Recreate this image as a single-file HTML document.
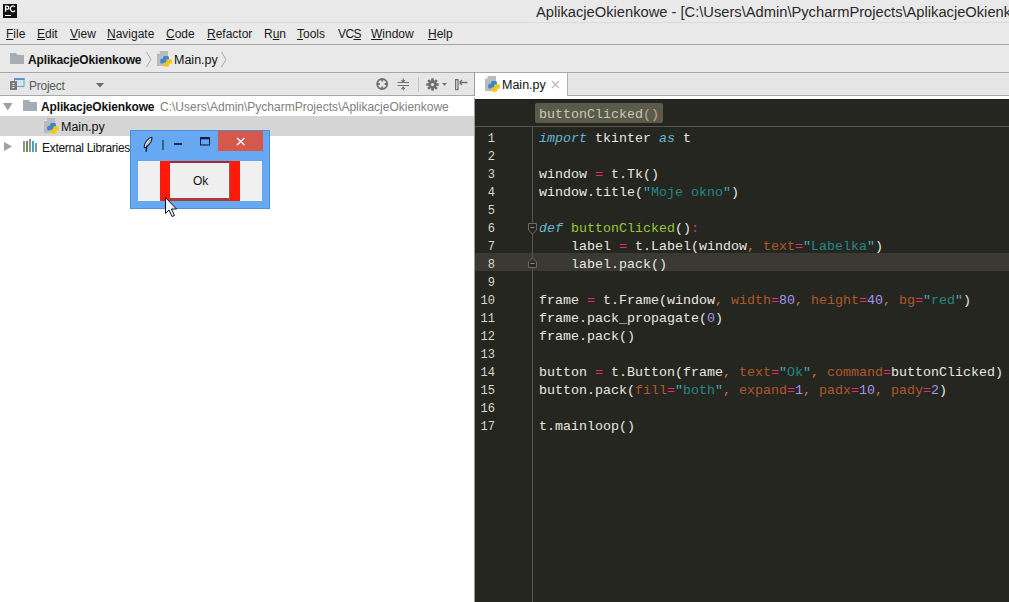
<!DOCTYPE html>
<html><head><meta charset="utf-8">
<style>
*{margin:0;padding:0;box-sizing:border-box}
html,body{width:1009px;height:602px;overflow:hidden;background:#fff;font-family:"Liberation Sans",sans-serif}
.a{position:absolute}
#title{left:0;top:0;width:1009px;height:23px;background:#e9e9e9;border-bottom:1px solid #dadada}
#menu{left:0;top:23px;width:1009px;height:22px;background:#e9e9e9;border-bottom:1px solid #a8a8a8}
#menu span{position:absolute;top:4px;font-size:12px;color:#1a1a1a;white-space:nowrap}
#menu u{text-decoration:underline;text-underline-offset:1px}
#nav{left:0;top:45px;width:1009px;height:28px;background:#e9e9e9;border-bottom:1px solid #a8a8a8}
#projhdr{left:0;top:73px;width:474px;height:23px;background:#e6e6e6;border-bottom:1px solid #a8a8a8}
#tree{left:0;top:96px;width:474px;height:506px;background:#fff}
#editor{left:474px;top:96px;width:535px;height:506px;background:#262621;border-left:1px solid #9a9a9a;border-top:3px solid #fff}
#tabbar{left:474px;top:73px;width:535px;height:23px;background:#e6e6e6;border-bottom:1px solid #a8a8a8}
.code{position:absolute;left:539px;font-family:"Liberation Mono",monospace;font-size:13.33px;white-space:pre;color:#e8e8e0;line-height:18px}
.ln{position:absolute;left:465px;width:30px;text-align:right;font-family:"Liberation Mono",monospace;font-size:12px;white-space:pre;color:#d8d8c8;line-height:18px}
.k{color:#62b8d4;font-style:italic}
.o{color:#e0306a}
.s{color:#23878a}
.q{color:#4aa6b6}
.f{color:#9fc43a}
.p{color:#ad582b}
.n{color:#a394ec}
.c{color:#c27a38}
</style></head><body>
<div id="title" class="a">
 <div class="a" style="left:3px;top:4px;width:14px;height:14px;background:#111"></div>
 <svg class="a" style="left:0;top:0" width="20" height="20"><path d="M5.6 11.8V6.1H7.3a1.55 1.55 0 0 1 0 3.1H5.6" stroke="#fff" stroke-width="1.3" fill="none"/><path d="M14.9 7A2.5 2.9 0 1 0 14.9 10.6" stroke="#fff" stroke-width="1.3" fill="none"/></svg>
 <div class="a" style="left:5px;top:15px;width:6px;height:1px;background:#fff"></div>
 <div class="a" style="left:536px;top:3.5px;font-size:14.7px;color:#2a2a2a;white-space:nowrap">AplikacjeOkienkowe - [C:\Users\Admin\PycharmProjects\AplikacjeOkienkowe] - ...\Main.py - PyCharm</div>
</div>
<div id="menu" class="a">
 <span style="left:6px"><u>F</u>ile</span>
 <span style="left:37px"><u>E</u>dit</span>
 <span style="left:70px"><u>V</u>iew</span>
 <span style="left:107px"><u>N</u>avigate</span>
 <span style="left:166px"><u>C</u>ode</span>
 <span style="left:207px"><u>R</u>efactor</span>
 <span style="left:264px">R<u>u</u>n</span>
 <span style="left:297px"><u>T</u>ools</span>
 <span style="left:338px;letter-spacing:-0.6px">VC<u>S</u></span>
 <span style="left:371px"><u>W</u>indow</span>
 <span style="left:428px"><u>H</u>elp</span>
</div>
<div id="nav" class="a"></div>
<svg class="a" style="left:10px;top:53px" width="14" height="11" viewBox="0 0 14 11"><path d="M0 0h6l1.2 2H14v9H0z" fill="#a6adb4"/></svg>
<div class="a" style="left:28px;top:53px;font-size:12px;font-weight:bold;color:#111;white-space:nowrap;letter-spacing:-0.15px">AplikacjeOkienkowe</div>
<svg class="a" style="left:145px;top:51px" width="8" height="17"><path d="M1.5 1l4.5 7.5-4.5 7.5" stroke="#a8a8a8" fill="none" stroke-width="1"/></svg>
<svg class="a" style="left:157px;top:51px" width="16" height="17" viewBox="0 0 16 17">
<path d="M3 0h8v15H0V3z" fill="#b8bcc0"/><path d="M0 3h3V0z" fill="#dfe2e4"/>
<rect x="6" y="5" width="6" height="4.5" rx="1.5" fill="#3b87cf"/><rect x="3.2" y="7.8" width="6" height="4.6" rx="1.5" fill="#3b87cf"/>
<rect x="9" y="8.2" width="6" height="4.6" rx="1.5" fill="#f7c51e"/><rect x="6.2" y="11.2" width="6" height="4.6" rx="1.5" fill="#f7c51e"/>
<rect x="6" y="8.6" width="3.2" height="2.6" fill="#3b87cf"/><rect x="9" y="11" width="3.2" height="2.4" fill="#f7c51e"/>
</svg>
<div class="a" style="left:174px;top:53px;font-size:12.5px;color:#111;white-space:nowrap">Main.py</div>
<svg class="a" style="left:220px;top:51px" width="8" height="17"><path d="M1.5 1l4.5 7.5-4.5 7.5" stroke="#a8a8a8" fill="none" stroke-width="1"/></svg>

<div id="projhdr" class="a"></div>
<svg class="a" style="left:10px;top:78px" width="15" height="12" viewBox="0 0 15 12">
 <rect x="4.5" y="0.5" width="9.5" height="8" fill="#d4e6f4" stroke="#6b9fcf"/>
 <rect x="4.5" y="0" width="10" height="2" fill="#5d95cc"/>
 <rect x="0" y="3" width="7" height="9" fill="#7c7c7c"/>
 <path d="M2.5 5.5h1.8M2.5 7.5h1.8M2.5 9.5h1.8" stroke="#eee" stroke-width="1"/>
</svg>
<div class="a" style="left:29px;top:79px;font-size:12px;letter-spacing:-0.25px;color:#5a5a5a;white-space:nowrap">Project</div>
<svg class="a" style="left:96px;top:83px" width="9" height="6"><path d="M0 0h8l-4 4.5z" fill="#6a6a6a"/></svg>
<svg class="a" style="left:375px;top:78px" width="14" height="13" viewBox="0 0 14 13">
 <circle cx="7.2" cy="6" r="5" fill="none" stroke="#707070" stroke-width="1.9"/>
 <path d="M7.2 1v2.6M7.2 8.4V11M2.2 6h2.6M9.6 6h2.6" stroke="#707070" stroke-width="1.8"/>
</svg>
<svg class="a" style="left:397px;top:77px" width="13" height="15" viewBox="0 0 13 15">
 <path d="M0.5 5.5h11.5M0.5 8.5h11.5" stroke="#707070" stroke-width="1.1"/>
 <path d="M6.2 1.5v3M4.4 3l1.8 2 1.8-2M6.2 13.5v-3.5M4.4 12l1.8-2 1.8 2" stroke="#707070" stroke-width="1.1" fill="none"/>
</svg>
<div class="a" style="left:418px;top:77px;width:1px;height:15px;background:#c4c4c4"></div>
<svg class="a" style="left:426px;top:78px" width="21" height="13" viewBox="0 0 21 13">
 <g transform="translate(6.5 6.5)" fill="#707070">
  <circle r="4.2"/>
  <rect x="-1.3" y="-6.2" width="2.6" height="12.4"/>
  <rect x="-6.2" y="-1.3" width="12.4" height="2.6"/>
  <rect x="-1.3" y="-6.2" width="2.6" height="12.4" transform="rotate(45)"/>
  <rect x="-1.3" y="-6.2" width="2.6" height="12.4" transform="rotate(-45)"/>
 </g>
 <circle cx="6.5" cy="6.5" r="1.6" fill="#e6e6e6"/>
 <path d="M16 5h5l-2.5 2.8z" fill="#707070"/>
</svg>
<svg class="a" style="left:454px;top:78px" width="15" height="13" viewBox="0 0 15 13">
 <rect x="1.6" y="1.6" width="2.4" height="10" fill="#e0e0e0" stroke="#707070" stroke-width="1.2"/>
 <path d="M5.5 4.5h8M5.5 4.5l2.5-2.5M5.5 4.5l2.5 2.5" stroke="#707070" stroke-width="1.3" fill="none"/>
</svg>

<div id="tree" class="a"></div>
<div class="a" style="left:0;top:116px;width:474px;height:20px;background:#d5d5d5"></div>
<svg class="a" style="left:3px;top:103px" width="10" height="8"><path d="M0 0h9.5l-4.75 7.5z" fill="#a0a0a0"/></svg>
<svg class="a" style="left:23px;top:100px" width="14" height="11" viewBox="0 0 14 11"><path d="M0 0h6l1.2 2H14v9H0z" fill="#a6adb4"/></svg>
<div class="a" style="left:41px;top:100px;font-size:12px;font-weight:bold;color:#111;white-space:nowrap;letter-spacing:-0.15px">AplikacjeOkienkowe</div>
<div class="a" style="left:160px;top:100px;font-size:12px;color:#808080;white-space:nowrap">C:\Users\Admin\PycharmProjects\AplikacjeOkienkowe</div>
<svg class="a" style="left:44px;top:118px" width="16" height="17" viewBox="0 0 16 17">
<path d="M3 0h8v15H0V3z" fill="#b8bcc0"/><path d="M0 3h3V0z" fill="#dfe2e4"/>
<rect x="6" y="5" width="6" height="4.5" rx="1.5" fill="#3b87cf"/><rect x="3.2" y="7.8" width="6" height="4.6" rx="1.5" fill="#3b87cf"/>
<rect x="9" y="8.2" width="6" height="4.6" rx="1.5" fill="#f7c51e"/><rect x="6.2" y="11.2" width="6" height="4.6" rx="1.5" fill="#f7c51e"/>
<rect x="6" y="8.6" width="3.2" height="2.6" fill="#3b87cf"/><rect x="9" y="11" width="3.2" height="2.4" fill="#f7c51e"/>
</svg>
<div class="a" style="left:61px;top:120px;font-size:12.5px;color:#111;white-space:nowrap">Main.py</div>
<svg class="a" style="left:4px;top:142px" width="8" height="10"><path d="M0 0v9l8 -4.5z" fill="#a0a0a0"/></svg>
<svg class="a" style="left:23px;top:139px" width="15" height="13" viewBox="0 0 15 13">
 <rect x="0" y="2" width="2" height="11" fill="#8e9296"/>
 <rect x="3" y="2" width="2" height="11" fill="#5a9a3c"/>
 <rect x="6" y="0" width="2" height="13" fill="#8e9296"/>
 <rect x="9" y="2" width="2" height="11" fill="#3ea2d8"/>
 <rect x="12" y="4" width="2" height="9" fill="#8e9296"/>
</svg>
<div class="a" style="left:42px;top:141px;font-size:12px;letter-spacing:-0.3px;color:#111;white-space:nowrap">External Libraries</div>

<div id="tabbar" class="a"></div>
<div class="a" style="left:475px;top:73px;width:93px;height:27px;background:#fff;border-right:1px solid #b0b0b0"></div><div class="a" style="left:474px;top:72px;width:1px;height:530px;background:#9c9c9c"></div>
<svg class="a" style="left:485px;top:76px" width="16" height="17" viewBox="0 0 16 17">
<path d="M3 0h8v15H0V3z" fill="#b8bcc0"/><path d="M0 3h3V0z" fill="#dfe2e4"/>
<rect x="6" y="5" width="6" height="4.5" rx="1.5" fill="#3b87cf"/><rect x="3.2" y="7.8" width="6" height="4.6" rx="1.5" fill="#3b87cf"/>
<rect x="9" y="8.2" width="6" height="4.6" rx="1.5" fill="#f7c51e"/><rect x="6.2" y="11.2" width="6" height="4.6" rx="1.5" fill="#f7c51e"/>
<rect x="6" y="8.6" width="3.2" height="2.6" fill="#3b87cf"/><rect x="9" y="11" width="3.2" height="2.4" fill="#f7c51e"/>
</svg>
<div class="a" style="left:502px;top:78px;font-size:12.5px;color:#111;white-space:nowrap">Main.py</div>
<svg class="a" style="left:551px;top:80px" width="9" height="9"><path d="M1 1l7 7M8 1L1 8" stroke="#bababa" stroke-width="1.3"/></svg>
<div id="editor" class="a"></div>
<div class="a" style="left:475px;top:99px;width:534px;height:1px;background:#1c1c19"></div>
<div class="a" style="left:475px;top:253px;width:534px;height:18px;background:#3b3a32"></div>
<div class="a" style="left:475px;top:126px;width:534px;height:1px;background:#56564f"></div>
<div class="a" style="left:532px;top:127px;width:1px;height:475px;background:#55554f"></div>
<div class="a" style="left:535px;top:103px;width:128px;height:20px;background:#5a5b4a;border-radius:2px"></div>
<div class="a" style="left:539px;top:106px;font-family:'Liberation Mono',monospace;font-size:13.33px;line-height:18px;color:#c8c8b8;white-space:pre">buttonClicked<span style="color:#c8a888">()</span></div>
<svg class="a" style="left:527px;top:222px" width="11" height="13" viewBox="0 0 11 13"><path d="M1.5 1.5h8v6.5l-4 4-4-4z" fill="#262621" stroke="#6a6a62"/><path d="M3.5 5.5h4" stroke="#8a8a82"/></svg>
<svg class="a" style="left:527px;top:257px" width="11" height="12" viewBox="0 0 11 12"><path d="M1.5 10.5h8v-5.5l-4-4-4 4z" fill="#2a2a25" stroke="#6a6a62"/><path d="M3.5 6.5h4" stroke="#8a8a82"/></svg>
<div class="ln" style="top:130px">1
2
3
4
5
6
7
8
9
10
11
12
13
14
15
16
17</div>
<div class="code" style="top:129.5px"><span class="k">import</span> tkinter <span class="k">as</span> t

window <span class="o">=</span> t.Tk()
window.title(<span class="q">"</span><span class="s">Moje okno</span><span class="q">"</span>)

<span class="k">def</span> <span class="f">buttonClicked</span>()<span class="o">:</span>
    label <span class="o">=</span> t.Label(window<span class="c">,</span><span class="p"> text</span><span class="o">=</span><span class="q">"</span><span class="s">Labelka</span><span class="q">"</span>)
    label.pack()

frame <span class="o">=</span> t.Frame(window<span class="c">,</span><span class="p"> width</span><span class="o">=</span><span class="n">80</span><span class="c">,</span><span class="p"> height</span><span class="o">=</span><span class="n">40</span><span class="c">,</span><span class="p"> bg</span><span class="o">=</span><span class="q">"</span><span class="s">red</span><span class="q">"</span>)
frame.pack_propagate(<span class="n">0</span>)
frame.pack()

button <span class="o">=</span> t.Button(frame<span class="c">,</span><span class="p"> text</span><span class="o">=</span><span class="q">"</span><span class="s">Ok</span><span class="q">"</span><span class="c">,</span><span class="p"> command</span><span class="o">=</span>buttonClicked)
button.pack(<span class="p">fill</span><span class="o">=</span><span class="q">"</span><span class="s">both</span><span class="q">"</span><span class="c">,</span><span class="p"> expand</span><span class="o">=</span><span class="n">1</span><span class="c">,</span><span class="p"> padx</span><span class="o">=</span><span class="n">10</span><span class="c">,</span><span class="p"> pady</span><span class="o">=</span><span class="n">2</span>)

t.mainloop()</div>

<div class="a" style="left:130px;top:130px;width:140px;height:79px;background:#66a8f2;border:1px solid #4f8ed8"></div>
<div class="a" style="left:218px;top:131px;width:45px;height:20px;background:#d6584a"></div>
<svg class="a" style="left:236px;top:137px" width="10" height="9"><path d="M1 1l7.5 7M8.5 1L1 8" stroke="#fff" stroke-width="1.5"/></svg>
<svg class="a" style="left:200px;top:137px" width="11" height="9"><rect x="0.5" y="1" width="9" height="7" fill="none" stroke="#0c2048" stroke-width="1.1"/><rect x="0" y="0" width="10" height="2.3" fill="#0c2048"/></svg>
<div class="a" style="left:174px;top:143px;width:8px;height:2px;background:#1a2a4a"></div>
<div class="a" style="left:162px;top:140px;width:1.5px;height:10px;background:#2f6878"></div>
<svg class="a" style="left:142px;top:136px" width="12" height="17" viewBox="0 0 12 17"><path d="M9.8 1.2C6 2 2.5 6.5 2.2 11C2.5 12 3.5 12 4.5 11C8 8 10.5 4 9.8 1.2z" fill="#e8f2fc" stroke="#0c1c38" stroke-width="1.1"/><path d="M4.6 10.5L4.2 15.8" stroke="#0c1c38" stroke-width="1.4"/><path d="M8.5 3.5L4 10" stroke="#5a7898" stroke-width="0.7"/></svg>
<div class="a" style="left:138px;top:161px;width:124px;height:40px;background:#f0f0f0"></div>
<div class="a" style="left:160px;top:161px;width:80px;height:40px;background:#ff1a0a"></div>
<div class="a" style="left:170px;top:161px;width:60px;height:40px;background:#efefef;border-top:2px solid #a8282c;border-bottom:3px solid #ac3a36;border-right:1px solid #9a5a50"></div>
<div class="a" style="left:193px;top:174px;font-size:12px;color:#111;white-space:nowrap">Ok</div>
<svg class="a" style="left:164px;top:196px" width="14" height="22" viewBox="0 0 14 22"><path d="M1.5 1.5v16l3.5-3.5 3 6.5 2.5-1-3-6.5h5z" fill="#eaf4fc" stroke="#111" stroke-width="1"/></svg>
</body></html>
